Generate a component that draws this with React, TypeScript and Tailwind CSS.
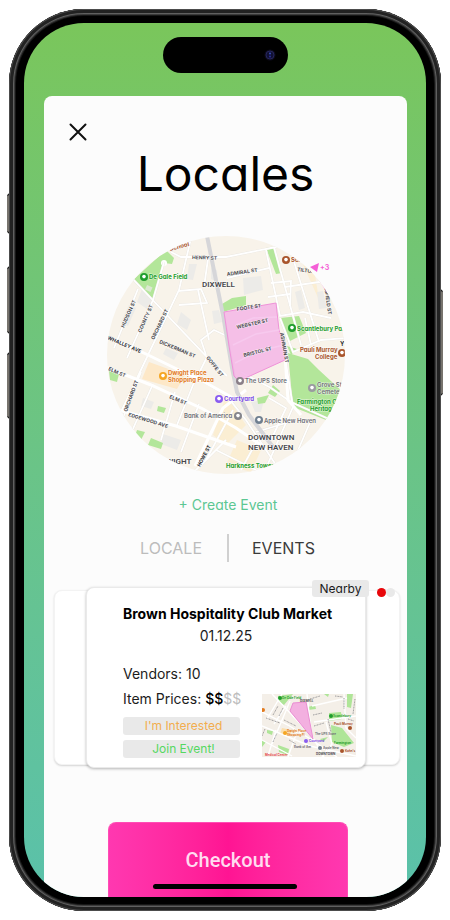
import React, { useState } from "react";

type Label = { t: string; x: number; y: number; r?: number; c?: string; s?: number; w?: number };

const STREET = "#4b4b50";
const GREEN = "#1f9d2c";
const BROWN = "#a9552c";
const GREY = "#6d6e75";

const labels: Label[] = [
  { t: "HENRY ST", x: 191, y: 259, r: 2 },
  { t: "ADMIRAL ST", x: 226, y: 276, r: -8 },
  { t: "FOOTE ST", x: 236, y: 311, r: -9 },
  { t: "WEBSTER ST", x: 236, y: 329, r: -13 },
  { t: "BRISTOL ST", x: 243, y: 357, r: -14 },
  { t: "HUDSON ST", x: 123, y: 328, r: -66 },
  { t: "COUNTY ST", x: 140, y: 333, r: -66 },
  { t: "ORCHARD ST", x: 153, y: 340, r: -64 },
  { t: "WHALLEY AVE", x: 106, y: 339, r: 23, c: "#2b2b2f" },
  { t: "DICKERMAN ST", x: 158, y: 343, r: 23 },
  { t: "GOFFE ST", x: 205, y: 358, r: 52 },
  { t: "ELM ST", x: 107, y: 370, r: 24 },
  { t: "ELM ST", x: 168, y: 398, r: 23 },
  { t: "ORCHARD ST", x: 126, y: 412, r: -70 },
  { t: "EDGEWOOD AVE", x: 127, y: 416, r: 17 },
  { t: "HOWE ST", x: 199, y: 467, r: -62, c: "#2b2b2f" },
  { t: "TILTON ST", x: 296, y: 271, r: 8 },
  { t: "MANSFIELD ST", x: 322, y: 278, r: 82 },
  { t: "ASHMUN ST", x: 279, y: 333, r: 80 },
  { t: "De Gale Field", x: 148, y: 279, c: GREEN, s: 6, w: 700 },
  { t: "School", x: 169, y: 251, r: -15, c: BROWN, s: 6, w: 700 },
  { t: "School", x: 290, y: 262, c: BROWN, s: 6, w: 700 },
  { t: "Scantlebury Park", x: 296, y: 331, c: GREEN, s: 6, w: 700 },
  { t: "Pauli Murray", x: 299, y: 352, c: BROWN, s: 6, w: 700 },
  { t: "College", x: 314, y: 359, c: BROWN, s: 6, w: 700 },
  { t: "Dwight Place", x: 167, y: 375, c: "#e27a1d", s: 6, w: 700 },
  { t: "Shopping Plaza", x: 167, y: 382, c: "#e27a1d", s: 6, w: 700 },
  { t: "The UPS Store", x: 244, y: 383, c: GREY, s: 6, w: 600 },
  { t: "Courtyard", x: 223, y: 401, c: "#7a4be6", s: 6, w: 700 },
  { t: "Bank of America", x: 183, y: 418, c: GREY, s: 6, w: 600 },
  { t: "Apple New Haven", x: 263, y: 423, c: GREY, s: 6, w: 600 },
  { t: "Grove St", x: 316, y: 387, c: GREY, s: 6, w: 600 },
  { t: "Cemetery", x: 316, y: 394, c: GREY, s: 6, w: 600 },
  { t: "Farmington C", x: 296, y: 404, c: GREEN, s: 6, w: 700 },
  { t: "Heritag", x: 309, y: 411, c: GREEN, s: 6, w: 700 },
  { t: "Harkness Tower", x: 225, y: 468, c: GREEN, s: 6, w: 700 },
  { t: "Y", x: 339, y: 346, c: "#333", s: 6 },
];

const bigLabels: Label[] = [
  { t: "DIXWELL", x: 201, y: 287 },
  { t: "DOWNTOWN", x: 247, y: 440 },
  { t: "NEW HAVEN", x: 247, y: 450 },
  { t: "DWIGHT", x: 160, y: 464 },
];

const roads = [
  "M128 275 L206 357 L226 376",
  "M190 238 L178 290 L147 355 L118 416",
  "M163 262 L152 300 L126 358",
  "M137 289 L113 348",
  "M170 252 L180 257 L225 257 L275 247 L300 243",
  "M177 291 L200 289 L206 303 L178 305",
  "M197 290 L208 340",
  "M207 259 L203 287",
  "M205 355 L200 340 L213 330 L228 337",
  "M226 278 L268 268",
  "M265 250 L279 316 L302 312 L330 318",
  "M273 247 L300 345",
  "M290 252 L318 342",
  "M284 287 L325 281",
  "M270 283 L290 281 L289 306",
  "M267 297 L289 294",
  "M279 318 L292 352 L320 340 L345 338",
  "M304 318 L310 345",
  "M152 384 L127 440",
  "M174 392 L160 440",
  "M198 404 L180 452",
  "M118 428 L140 372",
  "M200 380 L225 395 L245 420 L275 465",
  "M206 357 L192 385 L176 425",
  "M240 372 L270 388 L290 402 L330 420",
  "M284 358 L292 407 L262 475",
  "M255 432 L295 420",
  "M225 440 L190 475",
  "M232 410 L205 460",
  "M215 450 L255 470",
  "M240 470 L262 430",
  "M268 398 L285 408 L270 440",
  "M310 420 L295 455",
];

const mainRoads = [
  "M100 334 L145 354 L180 371 L200 380 L232 398",
  "M102 366 L150 385 L202 409 L235 428 L260 445",
  "M110 408 L125 412 L175 426 L235 447",
  "M245 390 L222 408 L194 466",
  "M284 355 L287 400 L300 415",
];

const blocks = [
  "M141 289 L151 300 L146 309 L136 302Z",
  "M128 305 L135 308 L127 326 L120 322Z",
  "M242 278 L260 276 L262 290 L243 295Z",
  "M180 312 L190 320 L186 330 L176 324Z",
  "M188 264 L196 264 L192 280 L186 279Z",
  "M210 268 L216 270 L217 282 L210 279Z",
  "M165 348 L177 353 L173 360 L162 354Z",
  "M294 292 L300 290 L304 308 L298 310Z",
  "M162 434 L180 440 L176 450 L160 444Z",
  "M250 402 L263 400 L260 412 L254 412Z",
  "M142 398 L153 402 L150 409 L140 406Z",
  "M316 292 L322 291 L326 308 L318 309Z",
  "M211 311 L218 310 L221 322 L213 324Z",
];

const parks = [
  "M133 279 L165 250 L173 258 L171 264 L163 263 L152 299Z",
  "M265 248 L273 247 L281 273 L275 274Z",
  "M221 304 L231 298 L245 296 L245 305 L222 312Z",
  "M279 318 L298 316 L305 333 L287 342Z",
  "M287 353 L307 359 L318 370 L344 394 L325 420 L292 407Z",
  "M256 398 L268 395 L264 403 L257 404Z",
  "M272 385 L279 391 L274 397 L267 393Z",
  "M108 371 L118 374 L116 382 L109 380Z",
  "M157 406 L165 408 L163 413 L156 411Z",
  "M136 430 L144 432 L140 440 L134 436Z",
  "M150 438 L162 443 L160 449 L147 445Z",
  "M286 346 L296 349 L290 355Z",
];

function Pin({ x, y, c, r = 4 }: { x: number; y: number; c: string; r?: number }) {
  return (
    <g>
      <circle cx={x} cy={y} r={r} fill={c} />
      <circle cx={x} cy={y - 0.4} r={r * 0.45} fill="#fff" />
    </g>
  );
}

function LocaleMap() {
  return (
    <svg viewBox="105 235 240 240" className="block h-[240px] w-[240px] shrink-0 overflow-visible font-['Inter','Liberation_Sans',sans-serif]" role="img" aria-label="Map of locales">
      <defs>
        <clipPath id="round">
          <circle cx="225" cy="355" r="119" />
        </clipPath>
      </defs>
      <g clipPath="url(#round)">
        <rect x="105" y="235" width="240" height="240" fill="#f8f3ea" />
        <path d="M148 362 L184 375 L176 389 L141 379Z" fill="#fde8c8" />
        <path d="M225 395 L245 425 L225 445 L212 435Z M236 440 L260 450 L250 472 L225 465Z M300 240 L312 262 L318 300 L300 260Z" fill="#fbeed3" />
        {blocks.map((d) => <path key={d} d={d} fill="#ecebe8" />)}
        {parks.map((d) => <path key={d} d={d} fill="#b3e69a" />)}
        <circle cx="163" cy="263" r="3" fill="#fff" />
        <rect x="145" y="286" width="6" height="5" fill="#dbe8d0" transform="rotate(25 148 288)" />
        <g fill="none" stroke="#e7e4de" strokeWidth="2.4">
          {roads.map((d) => <path key={d} d={d} />)}
        </g>
        <g fill="none" stroke="#fff" strokeWidth="1.8">
          {roads.map((d) => <path key={d} d={d} />)}
        </g>
        <g fill="none" stroke="#fff" strokeWidth="3">
          {mainRoads.map((d) => <path key={d} d={d} />)}
        </g>
        <path d="M206 236 L222 315 L231 368 L236 392 L248 415 L272 447" fill="none" stroke="#d6d6d9" strokeWidth="4" />
        <path d="M223 312 L275 303 L278 330 L284 350 L284 360 L238 381 L233 376 L228 346Z" fill="#f5b5e6" fillOpacity="0.85" stroke="#ee92d8" strokeWidth="1" />
        <path d="M235 325 L252 318 L276 317 M232 345 L255 334 L278 330 M234 363 L258 351 L283 345" fill="none" stroke="#f7c9ee" strokeWidth="1.5" />
        <path d="M284 250 C302 256 316 272 326 292" fill="none" stroke="#f7a5e6" strokeWidth="2" />
        {labels.map((l) => (
          <text
            key={l.t + l.x}
            x={l.x}
            y={l.y}
            transform={l.r ? `rotate(${l.r} ${l.x} ${l.y})` : undefined}
            fill={l.c ?? STREET}
            fontSize={l.s ?? 5}
            fontWeight={l.w ?? 700}
            stroke="#fff"
            strokeOpacity="0.6"
            strokeWidth="1"
            paintOrder="stroke"
          >
            {l.t}
          </text>
        ))}
        {bigLabels.map((l) => (
          <text key={l.t} x={l.x} y={l.y} fill="#48484d" fontSize="8" className="font-['Roboto',sans-serif]" fontWeight="600" stroke="#fff" strokeWidth="1" strokeOpacity="0.7" paintOrder="stroke">
            {l.t}
          </text>
        ))}
        <Pin x={143} y={277} c={GREEN} />
        <Pin x={285} y={260} c={BROWN} />
        <Pin x={291} y={328} c={GREEN} />
        <Pin x={341} y={353} c={BROWN} />
        <Pin x={162} y={376} c="#f5a623" />
        <Pin x={239} y={381} c="#8a7f88" />
        <Pin x={218} y={399} c="#8a5cf0" />
        <Pin x={237} y={416} c="#85868c" />
        <Pin x={258} y={420} c="#6f7f90" />
        <Pin x={311} y={388} c="#9a9ba0" />
      </g>
      <path d="M309 267 L318 263 L316 272Z" fill="#f45fd6" />
      <text x="319" y="270" fontSize="7" fontWeight="700" fill="#f45fd6">+3</text>
    </svg>
  );
}

function EventMap() {
  const c = "#7b7b80";
  return (
    <svg viewBox="0 0 94 63" className="block h-[63px] w-[94px] font-['Inter','Liberation_Sans',sans-serif]" role="img" aria-label="Event location map">
      <rect width="94" height="63" fill="#f4efe8" />
      <path d="M16 2 L31 0 L22 11 L17 8Z M85 0 L91 0 L89 14 L85 13Z M67 19 L79 18 L80 25 L67 27Z M69 31 L80 34 L92 49 L82 53 L70 48Z M46 13 L53 11 L54 15 L46 16Z M5 36 L11 37 L10 41 L5 39Z M58 45 L66 43 L61 48Z M16 51 L27 55 L26 61 L17 58Z M0 46 L4 48 L0 53Z M62 0 L67 0 L66 3Z" fill="#afe598" />
      <path d="M20 34 L30 36 L28 42 L18 40Z" fill="#fbdfae" />
      <g fill="none" stroke="#fff" strokeWidth="1.4">
        <path d="M10 0 L50 42 L62 63 M0 18 L26 31 L50 46 L75 63 M0 32 L48 52 L94 62 M28 7 L10 50 M24 12 L12 30 M45 0 L50 45 M50 12 L85 4 M52 28 L94 22 M64 28 L70 50 L60 63 M82 0 L84 34 L94 44 M0 46 L30 62 M36 35 L26 63 M14 36 L6 62 M20 0 L5 25" />
      </g>
      <g fill="none" stroke={c} strokeWidth="1" strokeDasharray="1 0.6" opacity="0.75">
        <path d="M4 24 L18 29 M11 21 L16 12 M17 22 L21 14 M3 35 L0 42 M11 48 L15 39 M22 26 L34 32 M48 5 L58 2 M51 21 L60 19 M52 32 L62 29 M73 2 L81 3 M82 4 L82 15 M93 5 L91 20 M66 25 L69 38 M27 46 L34 50 M86 25 L92 27" />
      </g>
      <path d="M31 9 L44 8 L51 45 L28 17Z" fill="#f3a9df" fillOpacity="0.9" stroke="#ea8ed2" strokeWidth="1" />
      <g fontSize="3" fontWeight="700">
        <text x="20" y="5" fill={GREEN}>De Gale Field</text>
        <text x="38" y="8" fill="#48484d">DIXWELL</text>
        <text x="71" y="23" fill={GREEN}>Scantlebury</text>
        <text x="72" y="31" fill={BROWN}>Pauli Murray</text>
        <text x="25" y="38" fill="#e27a1d">Dwight Place</text>
        <text x="25" y="42" fill="#e27a1d">Shopping Pl</text>
        <text x="53" y="41" fill={GREY}>The UPS Store</text>
        <text x="47" y="48" fill="#7a4be6">Courtyard</text>
        <text x="32" y="54" fill={GREY}>Bank of Am</text>
        <text x="61" y="55" fill={GREY}>Apple New</text>
        <text x="72" y="50" fill={GREEN}>Farmington</text>
        <text x="54" y="61" fill="#48484d">DOWNTOWN</text>
        <text x="83" y="58" fill={BROWN}>Kahn's</text>
        <text x="3" y="62" fill="#e5484d">Medical Center</text>
      </g>
      <circle cx="18" cy="4" r="2" fill={GREEN} />
      <circle cx="69" cy="22" r="2" fill={GREEN} />
      <circle cx="1" cy="16" r="2" fill="#e27a1d" />
      <circle cx="23" cy="39" r="2" fill="#f5a623" />
      <circle cx="44" cy="47" r="2" fill="#8a5cf0" />
      <circle cx="58" cy="54" r="2" fill="#6f7f90" />
      <circle cx="80" cy="57" r="2" fill={BROWN} />
      <circle cx="88" cy="34" r="2" fill={BROWN} />
    </svg>
  );
}

function EventCard() {
  return (
    <section className="relative mr-[7px] ml-[10px]">
      <div className="absolute inset-x-0 top-[3px] bottom-[3px] rounded-lg border border-[#f3f3f3] bg-white shadow-[0_1px_2px_rgba(0,0,0,0.16)]" />
      <article className="relative mr-[34px] ml-[32px] h-[181px] rounded-lg border border-[#eaeaea] bg-white px-[36px] pt-[16px] shadow-[0_1px_3px_rgba(0,0,0,0.28)]">
        <h2 className="text-center text-sm leading-5 font-bold whitespace-nowrap text-black">Brown Hospitality Club Market</h2>
        <p className="mt-[2px] text-center text-sm leading-5 text-[#1c1c1c]">01.12.25</p>
        <p className="mt-[18px] text-sm leading-5 text-[#1c1c1c]">Vendors: 10</p>
        <p className="mt-[5px] text-sm leading-5 text-[#1c1c1c]">
          Item Prices: <span className="font-medium text-black">$$</span><span className="text-[#bdbdbd]">$$</span>
        </p>
        <div className="mt-[8px] flex w-[117px] flex-col gap-[5px] text-xs">
          <button type="button" className="h-[18px] rounded-[3px] bg-[#e9e9e9] pl-1 leading-[18px] text-[#f2ad4e]">I'm Interested</button>
          <button type="button" className="h-[18px] rounded-[3px] bg-[#e9e9e9] pl-1 leading-[18px] text-[#55d861]">Join Event!</button>
        </div>
        <div className="absolute right-[9px] bottom-[10px]">
          <EventMap />
        </div>
      </article>
      <span className="absolute -top-[7px] right-[31px] h-[17px] w-[57px] rounded-[3px] bg-[#e9e9e9] text-center text-xs leading-[17px] text-[#1c1c1c]">Nearby</span>
      <div className="absolute top-[1px] right-[5px] flex">
        <span className="z-10 h-[9px] w-[9px] rounded-full bg-[#e8070b]" />
        <span className="h-[9px] w-[9px] rounded-full bg-[#e9e9e9]" />
      </div>
    </section>
  );
}

export default function App() {
  const [tab, setTab] = useState<"locale" | "events">("events");
  const tone = (active: boolean) => (active ? "text-[#3a3a3a]" : "text-[#bcbcbc]");

  return (
    <main className="flex min-h-screen justify-center bg-white px-[9px] pt-[9px] font-['Inter','Liberation_Sans',sans-serif] [font-feature-settings:'cv11']">
      <div className="relative h-fit w-full max-w-[432px]">
        <div className="absolute top-[184px] -left-[2px] h-[41px] w-1 rounded-l-sm border-y-2 border-[#1a1a1a] bg-[#77736d]" />
        <div className="absolute top-[257px] -left-[2px] h-[68px] w-1 rounded-l-sm border-y-2 border-[#1a1a1a] bg-[#77736d]" />
        <div className="absolute top-[343px] -left-[2px] h-[67px] w-1 rounded-l-sm border-y-2 border-[#1a1a1a] bg-[#77736d]" />
        <div className="absolute top-[280px] -right-[2px] h-[107px] w-1 rounded-r-sm border-y-2 border-[#1a1a1a] bg-[#77736d]" />

        <div className="relative rounded-[75px] bg-black px-[15px] py-[14px] shadow-[inset_0_0_0_1px_#4c4c4c,inset_0_0_0_4px_#222222,inset_0_0_0_5px_#606060,inset_0_0_0_6px_#3a3a3a,inset_0_0_0_7px_#161616]">
          <div className="relative overflow-hidden rounded-[60px] bg-linear-to-b from-[#7ac65b] to-[#5ac1aa] pt-[14px] pr-[19px] pl-5">
            <div className="mx-auto mb-[23px] flex h-9 w-[125px] items-center justify-end rounded-full bg-black pr-[12px]">
              <svg viewBox="0 0 12 12" className="h-3 w-3">
                <circle cx="6" cy="6" r="5.5" fill="#0d0b1c" />
                <circle cx="6" cy="6" r="4" fill="#101033" stroke="#25255a" strokeWidth="1" />
                <circle cx="6" cy="4.4" r="1" fill="#3a4db5" />
                <circle cx="6" cy="7.6" r="1" fill="#2b2f95" />
              </svg>
            </div>

            <div className="flex flex-col rounded-t-lg bg-[#fcfcfc] pt-[27px]">
              <button type="button" aria-label="Close" className="ml-[25px] w-fit">
                <svg viewBox="0 0 18 18" className="block h-[18px] w-[18px]" fill="none" stroke="#111" strokeWidth="2" strokeLinecap="round">
                  <path d="M1.5 1.5 L16.5 16.5 M16.5 1.5 L1.5 16.5" />
                </svg>
              </button>
              <h1 className="mt-[7px] text-center text-5xl leading-[52px] text-black">Locales</h1>
              <div className="mt-[35px] flex justify-center">
                <LocaleMap />
              </div>
              <div className="flex flex-col pl-[5px]">
                <button type="button" className="mx-auto mt-5 text-sm leading-5 text-[#5cc793]">+ Create Event</button>
                <nav className="mt-[19px] flex h-7 items-center justify-center text-base">
                  <button type="button" onClick={() => setTab("locale")} className={`w-[89px] pr-[25px] text-right ${tone(tab === "locale")}`}>LOCALE</button>
                  <span className="h-7 w-[2px] bg-[#d0d0d0]" />
                  <button type="button" onClick={() => setTab("events")} className={`w-[89px] pl-[23px] text-left ${tone(tab === "events")}`}>EVENTS</button>
                </nav>
              </div>
              <div className="mt-[25px]">
                <EventCard />
              </div>
              <div className="mt-[54px] flex justify-center pl-[5px]">
                <button type="button" className="h-[75px] w-[67%] rounded-t-lg border border-b-0 border-[#ff4db5] bg-linear-to-r from-[#ff38b0] via-[#ff1493] to-[#ff38b0] font-['Roboto',sans-serif] text-xl font-medium text-[#ffdcf0]">
                  Checkout
                </button>
              </div>
            </div>
            <div className="absolute bottom-2 left-1/2 h-[5px] w-36 -translate-x-1/2 rounded-full bg-black" />
          </div>
        </div>
      </div>
    </main>
  );
}
